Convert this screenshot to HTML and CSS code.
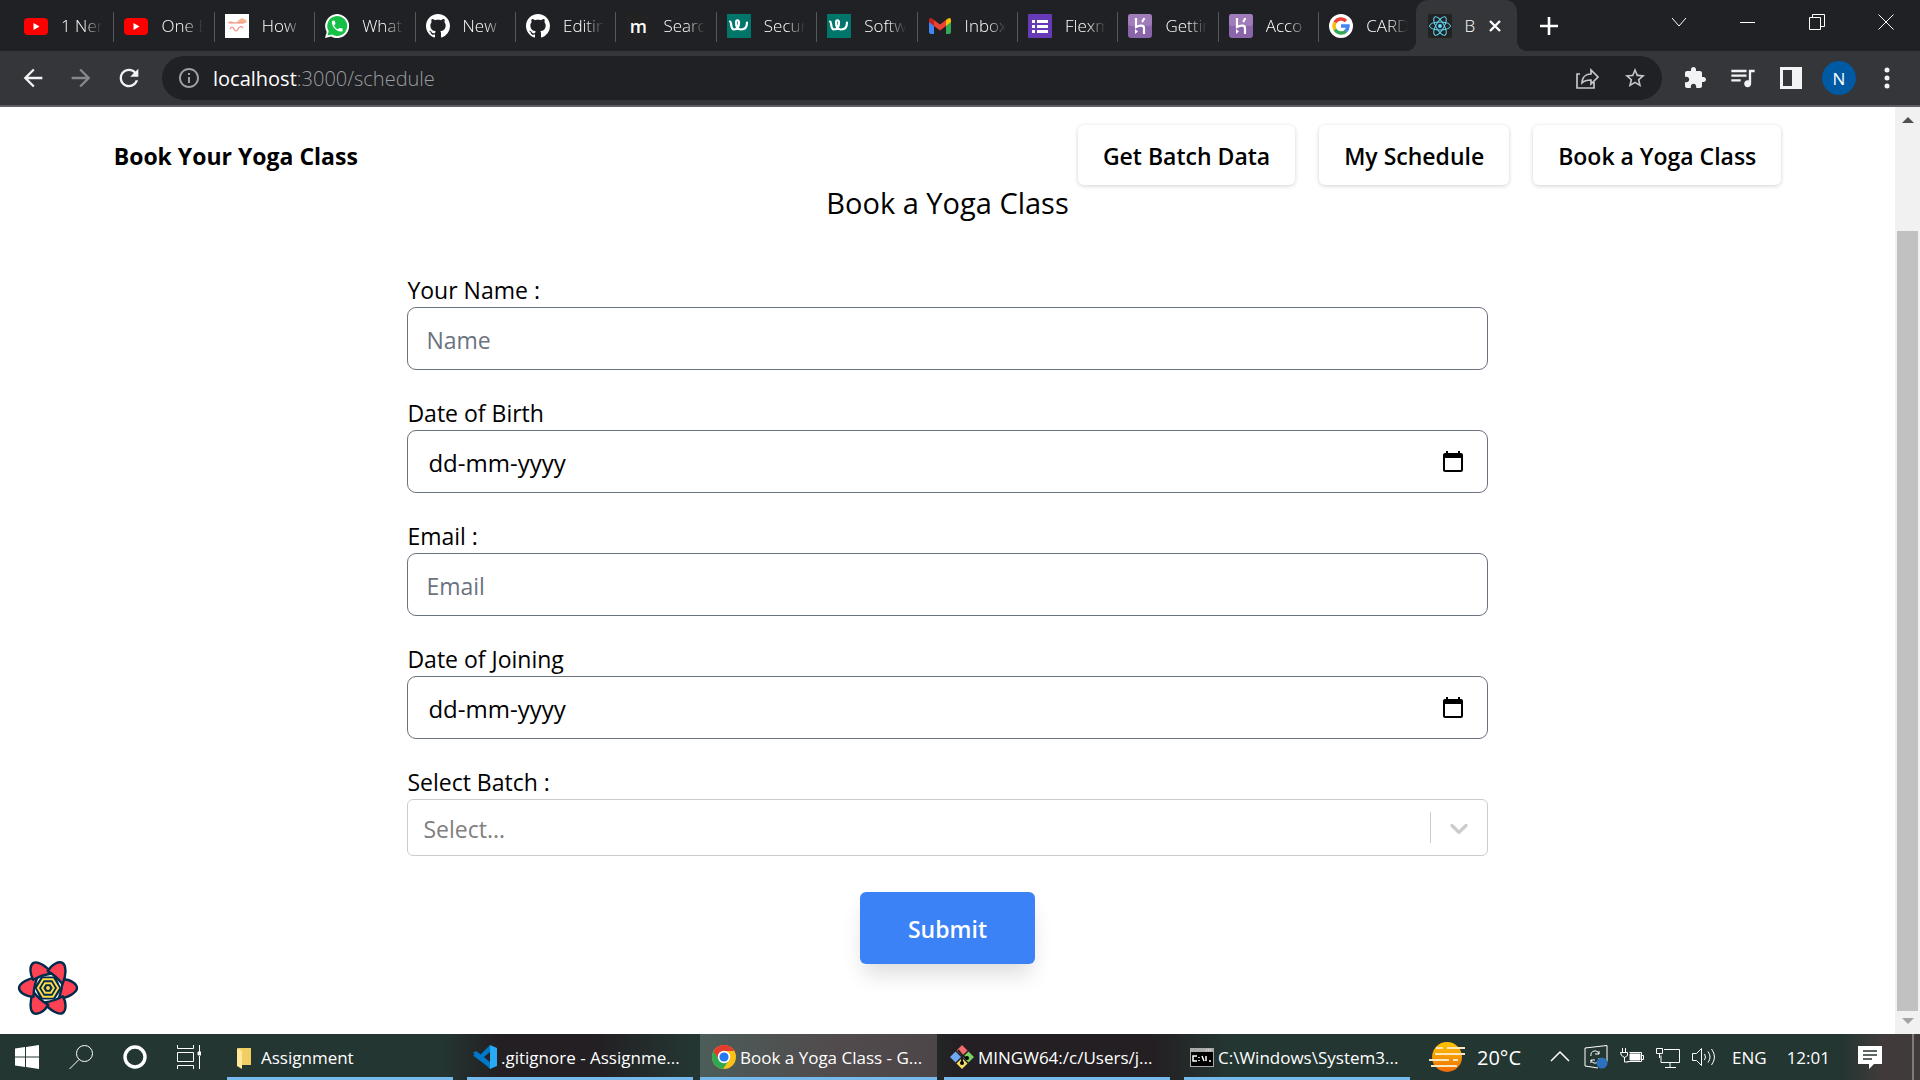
FILE: index.html
```html
<!DOCTYPE html>
<html lang="en">
<head>
<meta charset="utf-8">
<title>Book a Yoga Class</title>
<link rel="stylesheet" href="styles.css">
</head>
<body>
<svg class="sprite" aria-hidden="true">
  <symbol id="youtube" viewBox="0 0 24 24"><rect y="4" width="24" height="17" rx="4" fill="#f00"/><path d="M9.500 9v7l6-3.500z" fill="#fff"/></symbol>
  <symbol id="github" viewBox="0 0 16 16"><path fill="#fff" d="M8 0C3.58 0 0 3.58 0 8c0 3.54 2.29 6.53 5.47 7.59.4.07.55-.17.55-.38 0-.19-.01-.82-.01-1.49-2.01.37-2.53-.49-2.69-.94-.09-.23-.48-.94-.82-1.13-.28-.15-.68-.52-.01-.53.63-.01 1.08.58 1.23.82.72 1.21 1.87.87 2.33.66.07-.52.28-.87.51-1.07-1.78-.2-3.64-.89-3.64-3.95 0-.87.31-1.59.82-2.15-.08-.2-.36-1.02.08-2.12 0 0 .67-.21 2.2.82.64-.18 1.32-.27 2-.27s1.36.09 2 .27c1.530-1.040 2.200-.820 2.200-.820.44 1.100.16 1.920.08 2.120.51.56.82 1.270.82 2.150 0 3.070-1.870 3.750-3.650 3.950.29.25.54.73.54 1.480 0 1.070-.01 1.930-.01 2.200 0 .21.15.46.55.38A8.010 8.010 0 0 0 16 8c0-4.420-3.580-8-8-8z"/></symbol>
  <symbol id="workable" viewBox="0 0 24 24"><rect width="24" height="24" fill="#00756a"/><path d="M3 7.500c2 0 0 8 4 8s5-4 5-7-3-3-3 0 1 7 5 7 6-3 6-7" fill="none" stroke="#fff" stroke-width="2.200" stroke-linecap="round"/></symbol>
  <symbol id="heroku" viewBox="0 0 24 24"><rect width="24" height="24" rx="3" fill="#8a65a9"/><rect width="24" height="12" rx="3" fill="#a07cba"/><path d="M8 4v9c4-2 8-2 8 1v6M16 4c0 2-1 3-2 4" fill="none" stroke="#fff" stroke-width="2.200"/><path d="M7 15l3 2.500L7 20z" fill="#fff"/></symbol>
  <symbol id="arrow" viewBox="0 0 24 24"><path fill="currentColor" d="M20 11H7.830l5.590-5.590L12 4l-8 8 8 8 1.410-1.410L7.830 13H20v-2z"/></symbol>
  <symbol id="calendar" viewBox="0 0 24 24"><path fill="#000" d="M4 3h1V1h2v2h10V1h2v2h1c1.100 0 2 .9 2 2v15c0 1.100-.9 2-2 2H4c-1.100 0-2-.9-2-2V5c0-1.100.9-2 2-2zm0 5v12h16V8z"/></symbol>
</svg>

<header class="tabstrip">
  <nav class="tabs" aria-label="Open tabs">
    <button class="tab"><svg class="icon"><use href="#youtube"/></svg><span class="tab-title">1 Ner</span></button>
    <button class="tab"><svg class="icon"><use href="#youtube"/></svg><span class="tab-title">One E</span></button>
    <button class="tab"><svg class="icon" viewBox="0 0 24 24"><rect width="24" height="24" fill="#fff"/><path d="M2 9q3-3 6-1t6-2 8 1l-1 2H3z" fill="#f9b48f"/><path d="M4 9h15M5 15q2-4 4 0t4 0 5-1" fill="none" stroke="#f58a83" stroke-width="1.200"/></svg><span class="tab-title">How</span></button>
    <button class="tab"><svg class="icon" viewBox="0 0 24 24"><path d="M0 24l1.700-6A12 12 0 1 1 6 22.400z" fill="#fff"/><path d="M2.500 21.500l1.200-4.300A10 10 0 1 1 7 20.500z" fill="#16bf45"/><path transform="translate(5 5) scale(.6)" fill="#fff" d="M6.620 10.790c1.440 2.830 3.760 5.140 6.590 6.590l2.200-2.200c.27-.27.67-.36 1.020-.24 1.120.37 2.330.57 3.570.57.55 0 1 .45 1 1V20c0 .55-.45 1-1 1-9.390 0-17-7.610-17-17 0-.55.45-1 1-1h3.500c.55 0 1 .45 1 1 0 1.250.2 2.450.57 3.570.11.35.03.74-.25 1.020l-2.200 2.200z"/></svg><span class="tab-title">What</span></button>
    <button class="tab"><svg class="icon"><use href="#github"/></svg><span class="tab-title">New</span></button>
    <button class="tab"><svg class="icon"><use href="#github"/></svg><span class="tab-title">Editin</span></button>
    <button class="tab"><span class="icon letter-icon">m</span><span class="tab-title">Searc</span></button>
    <button class="tab"><svg class="icon"><use href="#workable"/></svg><span class="tab-title">Secur</span></button>
    <button class="tab"><svg class="icon"><use href="#workable"/></svg><span class="tab-title">Softw</span></button>
    <button class="tab"><svg class="icon" viewBox="0 0 24 24"><path d="M1 7v11q0 2 2 2h3V9z" fill="#4285f4"/><path d="M23 7v11q0 2-2 2h-3V9z" fill="#34a853"/><path d="M18 6l2-1.500q3-1.500 3 2V8l-5 4z" fill="#fbbc04"/><path d="M6 6L4 4.500Q1 3 1 6.500V8l5 4z" fill="#c5221f"/><path d="M6 6l6 4.500L18 6v6l-6 4.500L6 12z" fill="#ea4335"/></svg><span class="tab-title">Inbox</span></button>
    <button class="tab"><svg class="icon" viewBox="0 0 24 24"><rect width="24" height="24" rx="1" fill="#673ab7"/><path d="M4 6h3v3H4zm5 0h11v3H9zM4 11h3v3H4zm5 0h11v3H9zM4 16h3v3H4zm5 0h11v3H9z" fill="#fff"/></svg><span class="tab-title">Flexm</span></button>
    <button class="tab"><svg class="icon"><use href="#heroku"/></svg><span class="tab-title">Gettin</span></button>
    <button class="tab"><svg class="icon"><use href="#heroku"/></svg><span class="tab-title">Acco</span></button>
    <button class="tab"><svg class="icon" viewBox="0 0 24 24"><circle cx="12" cy="12" r="12" fill="#fff"/><g fill="none" stroke-width="3.400"><path d="M6 8.500A7 7 0 0 1 17 7" stroke="#ea4335"/><path d="M6 15.500a7 7 0 0 1 0-7" stroke="#fbbc05"/><path d="M17 17A7 7 0 0 1 6 15.500" stroke="#34a853"/><path d="M12 12h7a7 7 0 0 1-2.300 5.200" stroke="#4285f4"/></g></svg><span class="tab-title">CARD</span></button>
    <button class="tab tab-active"><svg class="icon" viewBox="0 0 24 24"><rect width="24" height="24" rx="2" fill="#222"/><g fill="none" stroke="#61dafb"><ellipse cx="12" cy="12" rx="10.500" ry="4"/><ellipse cx="12" cy="12" rx="10.500" ry="4" transform="rotate(60 12 12)"/><ellipse cx="12" cy="12" rx="10.500" ry="4" transform="rotate(120 12 12)"/></g><circle cx="12" cy="12" r="2" fill="#61dafb"/></svg><span class="tab-title">B</span><svg class="close" viewBox="0 0 14 14"><path d="M2 2l10 10M12 2L2 12" stroke="#fff" stroke-width="2.400"/></svg></button>
  </nav>
  <button class="new-tab" aria-label="New tab"><svg viewBox="0 0 18 18"><path d="M9 0v18M0 9h18" stroke="#fff" stroke-width="2.600"/></svg></button>
  <div class="window-controls">
    <button aria-label="Search tabs"><svg viewBox="0 0 18 18"><path d="M2 5l7 8 7-8"/></svg></button>
    <button aria-label="Minimize"><svg viewBox="0 0 18 18"><path d="M1 9.500h15"/></svg></button>
    <button aria-label="Restore"><svg viewBox="0 0 18 18"><path d="M1.500 4.500h11v12h-11zM4.500 4.500v-3h12v12h-4"/></svg></button>
    <button aria-label="Close"><svg viewBox="0 0 18 18"><path d="M1.500 1.500l15 15M16.500 1.500l-15 15"/></svg></button>
  </div>
</header>

<div class="toolbar">
  <button class="tool" aria-label="Back"><svg class="icon large" viewBox="0 0 24 24"><use href="#arrow"/></svg></button>
  <button class="tool tool-dim" aria-label="Forward"><svg class="icon large flip" viewBox="0 0 24 24"><use href="#arrow"/></svg></button>
  <button class="tool" aria-label="Reload"><svg class="icon large" viewBox="0 0 24 24"><path fill="currentColor" d="M17.650 6.350C16.200 4.900 14.210 4 12 4c-4.420 0-7.990 3.580-7.990 8s3.570 8 7.990 8c3.730 0 6.840-2.550 7.730-6h-2.080c-.82 2.330-3.040 4-5.650 4-3.310 0-6-2.690-6-6s2.690-6 6-6c1.660 0 3.140.69 4.220 1.780L13 11h7V4l-2.350 2.350z"/></svg></button>
  <div class="omnibox">
    <svg class="icon info" viewBox="0 0 24 24"><path fill="currentColor" d="M11 7h2v2h-2zm0 4h2v6h-2zm1-9C6.480 2 2 6.480 2 12s4.480 10 10 10 10-4.480 10-10S17.520 2 12 2zm0 18c-4.410 0-8-3.590-8-8s3.590-8 8-8 8 3.590 8 8-3.590 8-8 8z"/></svg>
    <span class="url"><b>localhost</b>:3000/schedule</span>
    <button class="tool tool-soft" aria-label="Share"><svg class="icon" viewBox="0 0 24 24"><path d="M5 8H2v14h17v-6M7 17c0-6 4-9 9-9V4l7 7-7 7v-4c-4 0-7 1-9 3z" fill="none" stroke="currentColor" stroke-width="1.700"/></svg></button>
    <button class="tool tool-soft" aria-label="Bookmark"><svg class="icon" viewBox="0 0 24 24"><path fill="currentColor" d="M22 9.240l-7.190-.62L12 2 9.190 8.630 2 9.240l5.460 4.730L5.820 21 12 17.270 18.180 21l-1.630-7.030L22 9.240zM12 15.400l-3.760 2.270 1-4.280-3.320-2.880 4.380-.38L12 6.100l1.710 4.040 4.380.38-3.320 2.880 1 4.280L12 15.400z"/></svg></button>
  </div>
  <button class="tool" aria-label="Extensions"><svg class="icon" viewBox="0 0 24 24"><path fill="currentColor" d="M20.500 11H19V7c0-1.100-.9-2-2-2h-4V3.500C13 2.120 11.880 1 10.500 1S8 2.120 8 3.500V5H4c-1.100 0-1.990.9-1.990 2v3.800H3.500c1.490 0 2.700 1.210 2.700 2.700s-1.210 2.700-2.700 2.700H2V20c0 1.100.9 2 2 2h3.800v-1.500c0-1.490 1.210-2.700 2.700-2.700 1.490 0 2.700 1.210 2.700 2.700V22H17c1.100 0 2-.9 2-2v-4h1.500c1.380 0 2.500-1.120 2.500-2.500S21.880 11 20.500 11z"/></svg></button>
  <button class="tool" aria-label="Media"><svg class="icon large" viewBox="0 0 24 24"><path fill="currentColor" d="M15 5H2v2h13V5zm0 4H2v2h13V9zM2 15h8v-2H2v2zM17 5v9.180c-.31-.11-.65-.18-1-.18-1.660 0-3 1.340-3 3s1.340 3 3 3 3-1.340 3-3V7h3V5h-5z"/></svg></button>
  <button class="tool" aria-label="Side panel"><svg class="icon" viewBox="0 0 24 24"><path fill="currentColor" fill-rule="evenodd" d="M1 1h22v22H1zM4 4v16h9V4z"/></svg></button>
  <button class="tool" aria-label="Profile"><span class="avatar">N</span></button>
  <button class="tool" aria-label="Menu"><svg class="icon" viewBox="0 0 24 24"><g fill="currentColor"><circle cx="12" cy="4" r="2.500"/><circle cx="12" cy="12" r="2.500"/><circle cx="12" cy="20" r="2.500"/></g></svg></button>
</div>

<div class="viewport">
  <div class="page">
    <nav class="site-nav">
      <a class="brand" href="#home">Book Your Yoga Class</a>
      <div class="nav-links">
        <a class="nav-link" href="#batches">Get Batch Data</a>
        <a class="nav-link" href="#my">My Schedule</a>
        <a class="nav-link" href="#schedule">Book a Yoga Class</a>
      </div>
    </nav>
    <main>
      <h1>Book a Yoga Class</h1>
      <form class="form">
        <div class="field"><label for="name">Your Name :</label><input class="control" id="name" type="text" placeholder="Name"></div>
        <div class="field"><label for="dob">Date of Birth</label><div class="control date"><input id="dob" type="text" placeholder="dd-mm-yyyy"><button type="button" aria-label="Pick date of birth"><svg class="icon"><use href="#calendar"/></svg></button></div></div>
        <div class="field"><label for="email">Email :</label><input class="control" id="email" type="email" placeholder="Email"></div>
        <div class="field"><label for="doj">Date of Joining</label><div class="control date"><input id="doj" type="text" placeholder="dd-mm-yyyy"><button type="button" aria-label="Pick date of joining"><svg class="icon"><use href="#calendar"/></svg></button></div></div>
        <div class="field"><label for="batch">Select Batch :</label><div class="select"><select id="batch"><option>Select...</option></select><span class="select-arrow"><svg viewBox="0 0 20 20"><path fill="#ccc" d="M4.516 7.548c0.436-0.446 1.043-0.481 1.576 0l3.908 3.747 3.908-3.747c0.533-0.481 1.141-0.446 1.574 0 0.436 0.445 0.408 1.197 0 1.615-0.406 0.418-4.695 4.502-4.695 4.502-0.217 0.223-0.502 0.335-0.787 0.335s-0.570-0.112-0.789-0.335c0 0-4.287-4.084-4.695-4.502s-0.436-1.170 0-1.615z"/></svg></span></div></div>
        <button class="submit" type="submit">Submit</button>
      </form>
    </main>
    <button class="devtools" aria-label="Open query devtools"><svg viewBox="-32 -29 64 58">
      <defs><path id="petal" d="M15 -9C24 -9 30 -4 30 0C30 4 22 10 11 11Q15 1 15 -9Z"/></defs>
      <g fill="#ff4154" stroke="#002c4b" stroke-width="2.500" stroke-linejoin="round"><use href="#petal"/><use href="#petal" transform="rotate(60)"/><use href="#petal" transform="rotate(120)"/><use href="#petal" transform="rotate(180)"/><use href="#petal" transform="rotate(240)"/><use href="#petal" transform="rotate(300)"/></g>
      <path d="M-14 -1L-7 -12H8L14 1L7 12H-8Z" fill="#002c4b"/>
      <g fill="none" stroke="#ffd94c" stroke-width="2"><path d="M-10.500 0L-5 -9H5L10.500 0L5 9H-5Z"/><path d="M-6 0L-3 -5H3L6 0L3 5H-3Z"/></g><circle r="2" fill="#ffd94c"/>
    </svg></button>
  </div>
  <div class="scrollbar" aria-hidden="true"><span class="scroll-up"></span><span class="scroll-track"><span class="scroll-thumb"></span></span><span class="scroll-down"></span></div>
</div>

<footer class="taskbar">
  <div class="launchers">
    <button aria-label="Start"><svg class="icon" viewBox="0 0 24 24"><path fill="#fff" d="M0 3.500l10-1.500v9.500H0zM11 2l13-2v11.500H11zM0 12.500h10V22L0 20.500zM11 12.500h13V24l-13-2z"/></svg></button>
    <button aria-label="Search"><svg class="icon line" viewBox="0 0 24 24"><circle cx="15.500" cy="8.500" r="8"/><path d="M10 14.500L.5 24"/></svg></button>
    <button aria-label="Assistant"><svg class="icon" viewBox="0 0 24 24"><circle cx="12" cy="12" r="10" fill="none" stroke="#fff" stroke-width="3.400"/></svg></button>
    <button aria-label="Task view"><svg class="icon line" viewBox="0 0 24 24"><path d="M.5 0v3.500h16V0M.5 7.500h16v9H.5zM.5 24v-3.500h16V24M22.500 0v7M22.500 11v13"/><path d="M21 7h3v3h-3z" fill="#fff"/></svg></button>
  </div>
  <div class="tasks">
    <button class="task"><svg class="icon" viewBox="0 0 24 24"><path d="M5 3h13v17H5z" fill="#f2cd62"/><path d="M4 3l5 3v18l-5-3z" fill="#ffe79c"/></svg><span>Assignment</span></button>
    <button class="task"><svg class="icon" viewBox="0 0 24 24"><path d="M17 0L5 12l-3-2.500-2 1L18 24V17L3 6 0 8l17 16z" fill="#0078c8"/><path d="M17 0l7 3v18l-7 3z" fill="#29a9f3"/><path d="M17 7v10l-6-5z" fill="#231f22"/></svg><span>.gitignore - Assignme...</span></button>
    <button class="task task-active"><svg class="icon" viewBox="0 0 24 24"><circle cx="12" cy="12" r="12" fill="#fbc116"/><path d="M12 12L1.600 6A12 12 0 0 0 11 24l6-9z" fill="#2da94f"/><path d="M1.600 6a12 12 0 0 1 20.800 0H12l-5 9z" fill="#e33b2e"/><circle cx="12" cy="12" r="6.200" fill="#fff"/><circle cx="12" cy="12" r="4.600" fill="#2479ee"/></svg><span>Book a Yoga Class - G...</span></button>
    <button class="task"><svg class="icon" viewBox="0 0 24 24"><path d="M12 0l5.500 5.500L12 11 6.500 5.500z" fill="#f26b6e"/><path d="M5.500 6.500L11 12l-5.500 5.500L0 12z" fill="#6fa8f5"/><path d="M18.500 6.500L24 12l-5.500 5.500L13 12z" fill="#7ed060"/><path d="M12 13l5.500 5.500L12 24l-5.500-5.500z" fill="#f7dc63"/><path d="M8 5l4 5v9M12 10l5 4" fill="none" stroke="#222" stroke-width="2"/><circle cx="12" cy="18" r="2"/><circle cx="17" cy="13" r="2"/></svg><span>MINGW64:/c/Users/j...</span></button>
    <button class="task"><svg class="icon" viewBox="0 0 24 24"><rect y="3" width="24" height="19" fill="#aaa"/><rect x="1" y="7" width="22" height="14" fill="#000"/><path d="M16 5h6" stroke="#fff" stroke-dasharray="1 1"/><path d="M7 11H3v5h4M9 12v1M9 15v1M12 11l2 5M16 11v5M19 16h2" fill="none" stroke="#fff" stroke-width="1.500"/></svg><span>C:\Windows\System3...</span></button>
  </div>
  <div class="tray">
    <button class="weather"><svg viewBox="0 0 36 32"><defs><linearGradient id="sun" x2="0" y2="1"><stop stop-color="#fdc500"/><stop offset="1" stop-color="#f06a0a"/></linearGradient></defs><circle cx="18" cy="16" r="15" fill="url(#sun)"/><path d="M7 7h7M18 7h18M6 13h30M0 19h20M24 19h5M2 25h26" stroke="#fbe8bd" stroke-width="2.200"/></svg><span>20°C</span></button>
    <svg class="icon line" viewBox="0 0 24 24"><path d="M3 16l9-9 9 9" stroke-width="1.500"/></svg>
    <svg class="icon line" viewBox="0 0 24 24"><path d="M1 3l22-2.500v16M14 23L1 21V3M7 11a4 4 0 0 1 8-2V6M15 9h-4M15 13a4 4 0 0 1-8 2v3M7 15h4"/><circle cx="18" cy="18" r="5.500" fill="#2b71bb" stroke="none"/></svg>
    <svg class="icon line" viewBox="0 0 24 24"><path d="M9.500 7.500h12v9h-14M21.500 10.500h2v4h-2M2.500 3v4M5.500 3v4M.5 7.500h7v3l-3 2-3-2zM4.500 12v5h4"/><path d="M10 9h10v6H10z" fill="#fff"/></svg>
    <svg class="icon line" viewBox="0 0 24 24"><path d="M8 4.500h15.500v13H5v-7M14 18v4M9 22.500h11M.5 3.500h6v5h-6zM3.500 9v4"/></svg>
    <svg class="icon line" viewBox="0 0 24 24"><path d="M.5 8.500h4l5-5v17l-5-5h-4zM12.500 9q2 3 0 6M16 6.500q4 5.500 0 11M19.500 4q6 8 0 16"/></svg>
    <span class="lang">ENG</span><span class="clock">12:01</span>
    <button class="notice" aria-label="Notifications"><svg class="icon" viewBox="0 0 24 24"><path d="M0 1h24v18h-8l-5 5v-5H0z" fill="#fff"/><path d="M5 6h14M5 10h14M5 14h9" stroke="#26362f" stroke-width="1.500"/></svg></button>
  </div>
</footer>
</body>
</html>
```

FILE: styles.css
```css
* { box-sizing: border-box; }

body {
  margin: 0;
  min-height: 100vh;
  display: flex;
  flex-direction: column;
  font-family: "Open Sans", "Noto Sans", sans-serif;
  font-size: 23px;
  color: #000;
  background: #fff;
}

button {
  font: inherit;
  color: inherit;
  padding: 0;
  border: 0;
  background: none;
}

a { color: inherit; text-decoration: none; }
svg { display: block; flex: none; }
.sprite { position: absolute; width: 0; height: 0; }
.icon { width: 24px; height: 24px; flex: none; }
.icon.large { width: 28px; height: 28px; }
.icon.flip { transform: scaleX(-1); }
.line { fill: none; stroke: #fff; stroke-width: 1; }

/* Tab strip */
.tabstrip {
  display: flex;
  height: 51px;
  background: #202124;
  color: #fff;
}
.tabs {
  flex: 1;
  min-width: 0;
  display: grid;
  grid-template-columns: repeat(15, minmax(0, 1fr));
  padding-left: 14px;
}
.tab {
  position: relative;
  display: flex;
  align-items: center;
  padding: 0 12px 0 10px;
  gap: 13px;
  font-size: 17px;
  font-weight: 300;
  text-align: left;
}
.tab::after {
  content: "";
  position: absolute;
  right: 0;
  top: 12px;
  width: 1px;
  height: 30px;
  background: #55575b;
}
.tab:nth-last-child(2)::after { display: none; }
.tab-title {
  flex: 1;
  min-width: 0;
  overflow: hidden;
  white-space: nowrap;
  -webkit-mask-image: linear-gradient(90deg, #000 55%, transparent);
  mask-image: linear-gradient(90deg, #000 55%, transparent);
}
.letter-icon {
  display: grid;
  place-items: center;
  font-size: 18px;
  font-weight: 600;
  line-height: 20px;
  background: #222;
}
.tab-active {
  margin: 0 3px 0 -4px;
  padding-left: 12px;
  background: #35363a;
  border-radius: 12px 12px 0 0;
}
/* Curved feet that join the active tab to the toolbar */
.tab-active::before,
.tab-active::after {
  content: "";
  position: absolute;
  top: auto;
  bottom: 0;
  width: 10px;
  height: 10px;
}
.tab-active::before {
  left: -10px;
  background: radial-gradient(circle at 0 0, transparent 10px, #35363a 10px);
}
.tab-active::after {
  right: -10px;
  background: radial-gradient(circle at 100% 0, transparent 10px, #35363a 10px);
}
.tab-active .tab-title {
  flex: 0 0 10px;
  -webkit-mask-image: none;
  mask-image: none;
}
.tab-active .close { width: 14px; height: 14px; }
.new-tab { width: 58px; display: grid; place-items: center; }
.new-tab svg { width: 18px; height: 18px; }
.window-controls { display: flex; margin-left: 66px; }
.window-controls button {
  width: 69px;
  height: 43px;
  display: grid;
  place-items: center;
}
.window-controls svg {
  width: 18px;
  height: 18px;
  fill: none;
  stroke: #fff;
  stroke-width: 1;
}

/* Toolbar */
.toolbar {
  display: flex;
  align-items: center;
  height: 56px;
  padding: 0 9px;
  border-bottom: 2px solid #5f6064;
  background: #35363a;
  color: #f1f3f4;
}
.tool { width: 48px; height: 44px; display: grid; place-items: center; }
.tool-dim { color: #87888b; }
.tool-soft { color: #c4c6c8; }
.omnibox {
  flex: 1;
  display: flex;
  align-items: center;
  height: 44px;
  margin: 0 9px;
  padding: 0 3px 0 15px;
  border-radius: 22px;
  background: #202124;
}
.info { color: #9aa0a6; }
.url { flex: 1; margin-left: 12px; font-size: 20px; color: #9a9da1; font-weight: 300; }
.url b { color: #fff; font-weight: 400; }
.avatar {
  width: 34px;
  height: 34px;
  border-radius: 50%;
  display: grid;
  place-items: center;
  font-size: 17px;
  color: #fff;
  background: #0059a3;
}

/* Web page */
.viewport { flex: 1; display: flex; }
.page { flex: 1; position: relative; padding: 18px 0 36px; }
.site-nav {
  display: flex;
  align-items: center;
  justify-content: space-between;
  padding: 0 6%;
}
.brand { padding-top: 2px; font-weight: 700; }
.nav-links { display: flex; gap: 24px; }
.nav-link {
  padding: 13px 25px 11px;
  line-height: 36px;
  font-weight: 600;
  border-radius: 6px;
  box-shadow: 0 1px 4px rgba(0, 0, 0, .18);
}
h1 {
  margin: 0 0 50px;
  font-size: 29px;
  font-weight: 400;
  line-height: 36px;
  text-align: center;
}
.form {
  display: flex;
  flex-direction: column;
  gap: 24px;
  width: 57%;
  margin: 0 auto;
}
.field { display: flex; flex-direction: column; }
.field label { padding-top: 2px; line-height: 34px; }
.control {
  width: 100%;
  height: 63px;
  padding: 3px 18px 0;
  font: inherit;
  color: #000;
  border: 1px solid #6b7280;
  border-radius: 9px;
  background: #fff;
}
.control::placeholder { color: #6b7280; opacity: 1; }
.date { display: flex; align-items: center; padding: 0 22px 0 20px; }
.date input {
  flex: 1;
  min-width: 0;
  padding: 2px 0 0;
  border: 0;
  font: inherit;
  font-size: 24px;
  background: none;
}
.date input::placeholder { color: #000; opacity: 1; }
.select {
  display: flex;
  align-items: center;
  height: 57px;
  border: 1px solid #ccc;
  border-radius: 6px;
}
.select select {
  flex: 1;
  height: 100%;
  padding: 3px 15px 0;
  border: 0;
  appearance: none;
  font: inherit;
  color: #808080;
  background: none;
}
.select-arrow {
  width: 57px;
  height: 31px;
  display: grid;
  place-items: center;
  border-left: 1px solid #ccc;
}
.select-arrow svg { width: 30px; height: 30px; }
.submit {
  align-self: center;
  margin-top: 12px;
  padding: 19px 48px 17px;
  line-height: 36px;
  font-weight: 600;
  color: #fff;
  border-radius: 6px;
  background: #3b82f6;
  box-shadow: 0 14px 22px -4px rgba(0, 0, 0, .14);
}
.devtools { position: absolute; left: 17px; bottom: 18px; }
.devtools svg { width: 62px; height: 56px; }

.scrollbar {
  display: flex;
  flex-direction: column;
  align-items: center;
  width: 25px;
  padding: 10px 2px;
  background: #f1f1f1;
}
.scroll-up, .scroll-down { border: 6px solid transparent; border-top: 0; border-bottom: 6px solid #505050; }
.scroll-down { border-top: 6px solid #a3a3a3; border-bottom: 0; }
.scroll-track { flex: 1; width: 100%; display: flex; padding: 108px 0 7px; }
.scroll-thumb { flex: 1; background: #c1c1c1; }

/* Taskbar */
.taskbar {
  display: flex;
  height: 46px;
  color: #fff;
  background: linear-gradient(90deg, #243632 23%, #231f22 26%, #231f22 31%, #243632 36%, #243632 46%, #231f22 50%, #231f22 60%, #243632 64%, #243632 96%, #403a3b 98%);
}
.launchers { display: flex; }
.launchers button { width: 54px; display: grid; place-items: center; }
.tasks { display: flex; gap: 14px; margin-left: 11px; }
.task {
  width: 226px;
  display: flex;
  align-items: center;
  gap: 4px;
  padding: 3px 0 0 6px;
  border-bottom: 3px solid #76b9ed;
  font-size: 17px;
  white-space: nowrap;
}
.task-active {
  width: 237px;
  margin: 0 -7px;
  padding-left: 12px;
  background: linear-gradient(90deg, #4c5d59, #514b4d 55%, #4c4648);
}
.tray {
  flex: 1;
  display: flex;
  align-items: center;
  justify-content: flex-end;
  gap: 12px;
  padding-right: 6px;
  font-size: 17px;
}
.weather { display: flex; align-items: center; gap: 12px; margin-right: 15px; font-size: 20px; }
.weather svg { width: 36px; height: 32px; }
.lang { margin-left: 4px; }
.clock { margin-left: 8px; }
.notice {
  display: grid;
  align-items: center;
  height: 46px;
  margin-left: 16px;
  padding-right: 30px;
  border-right: 2px solid #7d7b7b;
}
```
